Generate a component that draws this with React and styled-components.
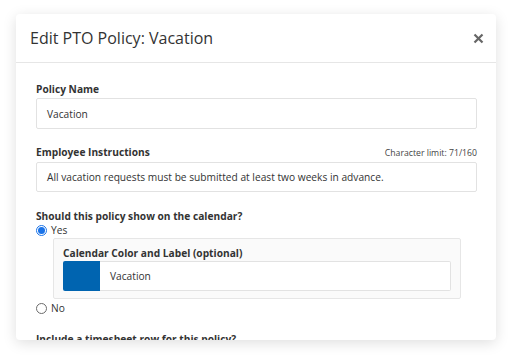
import React from 'react'
import styled, { createGlobalStyle } from 'styled-components'

const GlobalStyle = createGlobalStyle`
  html, body {
    margin: 0;
    padding: 0;
    background: #ffffff;
    font-family: 'Open Sans', 'Noto Sans', sans-serif;
    color: #333333;
  }
  * {
    box-sizing: border-box;
  }
`

const Page = styled.div`
  padding: 14px 16px;
  width: 513px;
  height: 359px;
  overflow: hidden;
`

const Modal = styled.div`
  width: 480px;
  height: 326px;
  background: #ffffff;
  border-radius: 4px;
  box-shadow: 0 3px 14px rgba(0, 0, 0, 0.13);
  display: flex;
  flex-direction: column;
  overflow: hidden;
`

const Header = styled.div`
  height: 49px;
  flex: 0 0 auto;
  display: flex;
  align-items: center;
  justify-content: space-between;
  padding: 0 12px 0 14px;
  border-bottom: 1px solid #e6e6e6;
`

const Title = styled.h2`
  margin: 0;
  font-size: 16px;
  font-weight: 400;
  color: #333333;
`

const Close = styled.button`
  border: 0;
  background: none;
  padding: 0;
  width: 12px;
  height: 12px;
  display: flex;
  align-items: center;
  justify-content: center;
  cursor: pointer;
`

const Body = styled.div`
  flex: 1;
  padding: 19px 19px 0 20px;
  display: flex;
  flex-direction: column;
`

const Field = styled.div`
  display: flex;
  flex-direction: column;
  margin-bottom: ${p => p.gap || 16}px;
`

const LabelRow = styled.div`
  display: flex;
  justify-content: space-between;
  align-items: baseline;
  margin-bottom: ${p => (p.tight ? 1 : 2)}px;
`

const Label = styled.label`
  font-size: 10.2px;
  line-height: 14px;
  font-weight: 700;
  color: #333333;
`

const Hint = styled.span`
  font-size: 8.7px;
  line-height: 14px;
  color: #444444;
`

const Input = styled.div`
  height: ${p => p.h || 31}px;
  border: 1px solid #e2e2e2;
  border-radius: 2px;
  background: #ffffff;
  display: flex;
  align-items: center;
  padding-left: 10px;
  font-size: 10.2px;
  color: #333333;
`

const RadioRow = styled.label`
  display: flex;
  align-items: center;
  gap: 4px;
  font-size: 10.2px;
  line-height: 15px;
  color: #333333;
`

const Radio = styled.span`
  width: 11px;
  height: 11px;
  border-radius: 50%;
  border: 1px solid ${p => (p.checked ? '#1a73e8' : '#6b6b6b')};
  background: #ffffff;
  display: flex;
  align-items: center;
  justify-content: center;
  &::after {
    content: '';
    display: ${p => (p.checked ? 'block' : 'none')};
    width: 7px;
    height: 7px;
    border-radius: 50%;
    background: #1a73e8;
  }
`

const CalendarBox = styled.div`
  margin: 0 0 2px 17px;
  width: 408px;
  background: #fafafa;
  border: 1px solid #e6e6e6;
  border-radius: 2px;
  padding: 7px 9px 7px 9px;
`

const SwatchRow = styled.div`
  display: flex;
  height: 30px;
`

const Swatch = styled.div`
  width: 37px;
  background: ${p => p.color};
  border-radius: 2px 0 0 2px;
`

const SwatchInput = styled(Input)`
  flex: 1;
  height: 30px;
  border-left: 0;
  border-radius: 0 2px 2px 0;
`

const XIcon = () => (
  <svg width="11" height="11" viewBox="0 0 11 11">
    <path d="M1.5 1.5 L9.5 9.5 M9.5 1.5 L1.5 9.5" stroke="#666666" strokeWidth="2.2" strokeLinecap="butt" />
  </svg>
)

export default function App () {
  return (
    <Page>
      <GlobalStyle />
      <Modal>
        <Header>
          <Title>Edit PTO Policy: Vacation</Title>
          <Close aria-label='Close'>
            <XIcon />
          </Close>
        </Header>
        <Body>
          <Field>
            <LabelRow>
              <Label>Policy Name</Label>
            </LabelRow>
            <Input>Vacation</Input>
          </Field>
          <Field gap={17}>
            <LabelRow>
              <Label>Employee Instructions</Label>
              <Hint>Character limit: 71/160</Hint>
            </LabelRow>
            <Input h={30}>All vacation requests must be submitted at least two weeks in advance.</Input>
          </Field>
          <Field gap={16}>
            <Label>Should this policy show on the calendar?</Label>
            <RadioRow>
              <Radio checked />
              Yes
            </RadioRow>
            <CalendarBox>
              <LabelRow tight>
                <Label>Calendar Color and Label (optional)</Label>
              </LabelRow>
              <SwatchRow>
                <Swatch color='#0064b0' />
                <SwatchInput>Vacation</SwatchInput>
              </SwatchRow>
            </CalendarBox>
            <RadioRow>
              <Radio />
              No
            </RadioRow>
          </Field>
          <Field>
            <Label>Include a timesheet row for this policy?</Label>
          </Field>
        </Body>
      </Modal>
    </Page>
  )
}
